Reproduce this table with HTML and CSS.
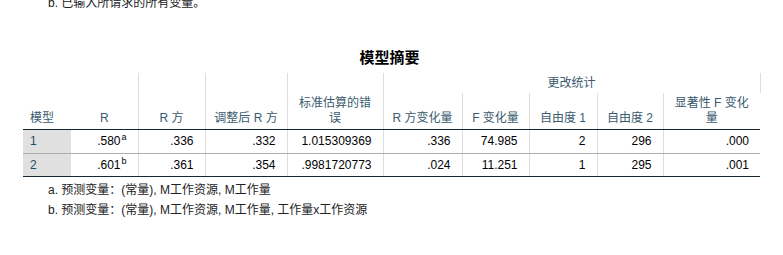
FILE: index.html
```html
<!DOCTYPE html>
<html lang="zh">
  <head>
    <meta charset="UTF-8" />
    <title>模型摘要</title>
    <link rel="stylesheet" href="styles.css">
  </head>
  <body>
    <div class="prev-note">b. 已输入所请求的所有变量。</div>

    <div class="output-block">
      <div class="table-title">模型摘要</div>
      <table class="spss-table">
        <colgroup>
          <col style="width: 48px" />
          <col style="width: 67px" />
          <col style="width: 67px" />
          <col style="width: 82px" />
          <col style="width: 96px" />
          <col style="width: 79px" />
          <col style="width: 67px" />
          <col style="width: 68px" />
          <col style="width: 66px" />
          <col style="width: 97px" />
        </colgroup>
        <thead>
          <tr class="group-row">
            <th rowspan="2" class="left no-line">模型</th>
            <th rowspan="2">R</th>
            <th rowspan="2">R 方</th>
            <th rowspan="2">调整后 R 方</th>
            <th rowspan="2">标准估算的错误</th>
            <th colspan="5" class="group">更改统计</th>
          </tr>
          <tr class="sub-row">
            <th>R 方变化量</th>
            <th>F 变化量</th>
            <th>自由度 1</th>
            <th>自由度 2</th>
            <th class="last">显著性 F 变化量</th>
          </tr>
        </thead>
        <tbody>
          <tr>
            <td class="row-label">1</td>
            <td>.580<sup>a</sup></td>
            <td>.336</td>
            <td>.332</td>
            <td>1.015309369</td>
            <td>.336</td>
            <td>74.985</td>
            <td>2</td>
            <td>296</td>
            <td class="last">.000</td>
          </tr>
          <tr>
            <td class="row-label">2</td>
            <td>.601<sup>b</sup></td>
            <td>.361</td>
            <td>.354</td>
            <td>.9981720773</td>
            <td>.024</td>
            <td>11.251</td>
            <td>1</td>
            <td>295</td>
            <td class="last">.001</td>
          </tr>
        </tbody>
      </table>
      <div class="footnotes">
        <div>a. 预测变量：(常量), M工作资源, M工作量</div>
        <div>b. 预测变量：(常量), M工作资源, M工作量, 工作量x工作资源</div>
      </div>
    </div>
  </body>
</html>
```

FILE: styles.css
```css
body {
  margin: 0;
  background-color: #fff;
  font-family: "Liberation Sans", Arial, "Noto Sans CJK SC", sans-serif;
  font-size: 12px;
  color: #010205;
}
.prev-note {
  margin-top: -5px;
  padding-left: 48px;
  line-height: 16px;
  color: #222;
}
.output-block {
  width: 737px;
  margin-left: 23px;
}
.table-title {
  margin-top: 36px;
  height: 20px;
  line-height: 20px;
  text-align: center;
  font-size: 15px;
  font-weight: bold;
  color: #000;
  font-family: "Noto Sans CJK SC", serif;
  padding-right: 4px;
}
.spss-table {
  margin-top: 6px;
  width: 737px;
  table-layout: fixed;
  border-collapse: collapse;
}
.spss-table th {
  font-weight: normal;
  color: #3a5a6e;
  vertical-align: bottom;
  text-align: center;
  padding: 0 8px 3px;
  line-height: 15px;
  border-right: 1px solid #dedede;
  border-bottom: 1px solid #152935;
}
.spss-table th.left {
  text-align: left;
  padding-left: 7px;
}
.spss-table th.no-line {
  border-right: none;
}
.spss-table th.last,
.spss-table td.last {
  border-right: none;
}
.group-row {
  height: 20px;
}
.group-row th.group {
  border-bottom: none;
  vertical-align: middle;
  padding-bottom: 0;
}
.sub-row {
  height: 36px;
}
.spss-table td {
  height: 23px;
  padding: 0 11px 0 7px;
  text-align: right;
  border-right: 1px solid #dedede;
  border-bottom: 1px solid #aeaeae;
  white-space: nowrap;
}
.spss-table tbody tr:last-child td {
  border-bottom: 1px solid #152935;
  height: 22px;
}
.spss-table td.row-label {
  text-align: left;
  background-color: #e0e0e0;
  color: #264a60;
  border-right: none;
}
.spss-table sup {
  font-size: 9px;
  line-height: 0;
  vertical-align: 5px;
  margin-left: 1px;
}
.footnotes {
  margin-top: 3px;
  padding-left: 25px;
  line-height: 20px;
  color: #222;
}
```
